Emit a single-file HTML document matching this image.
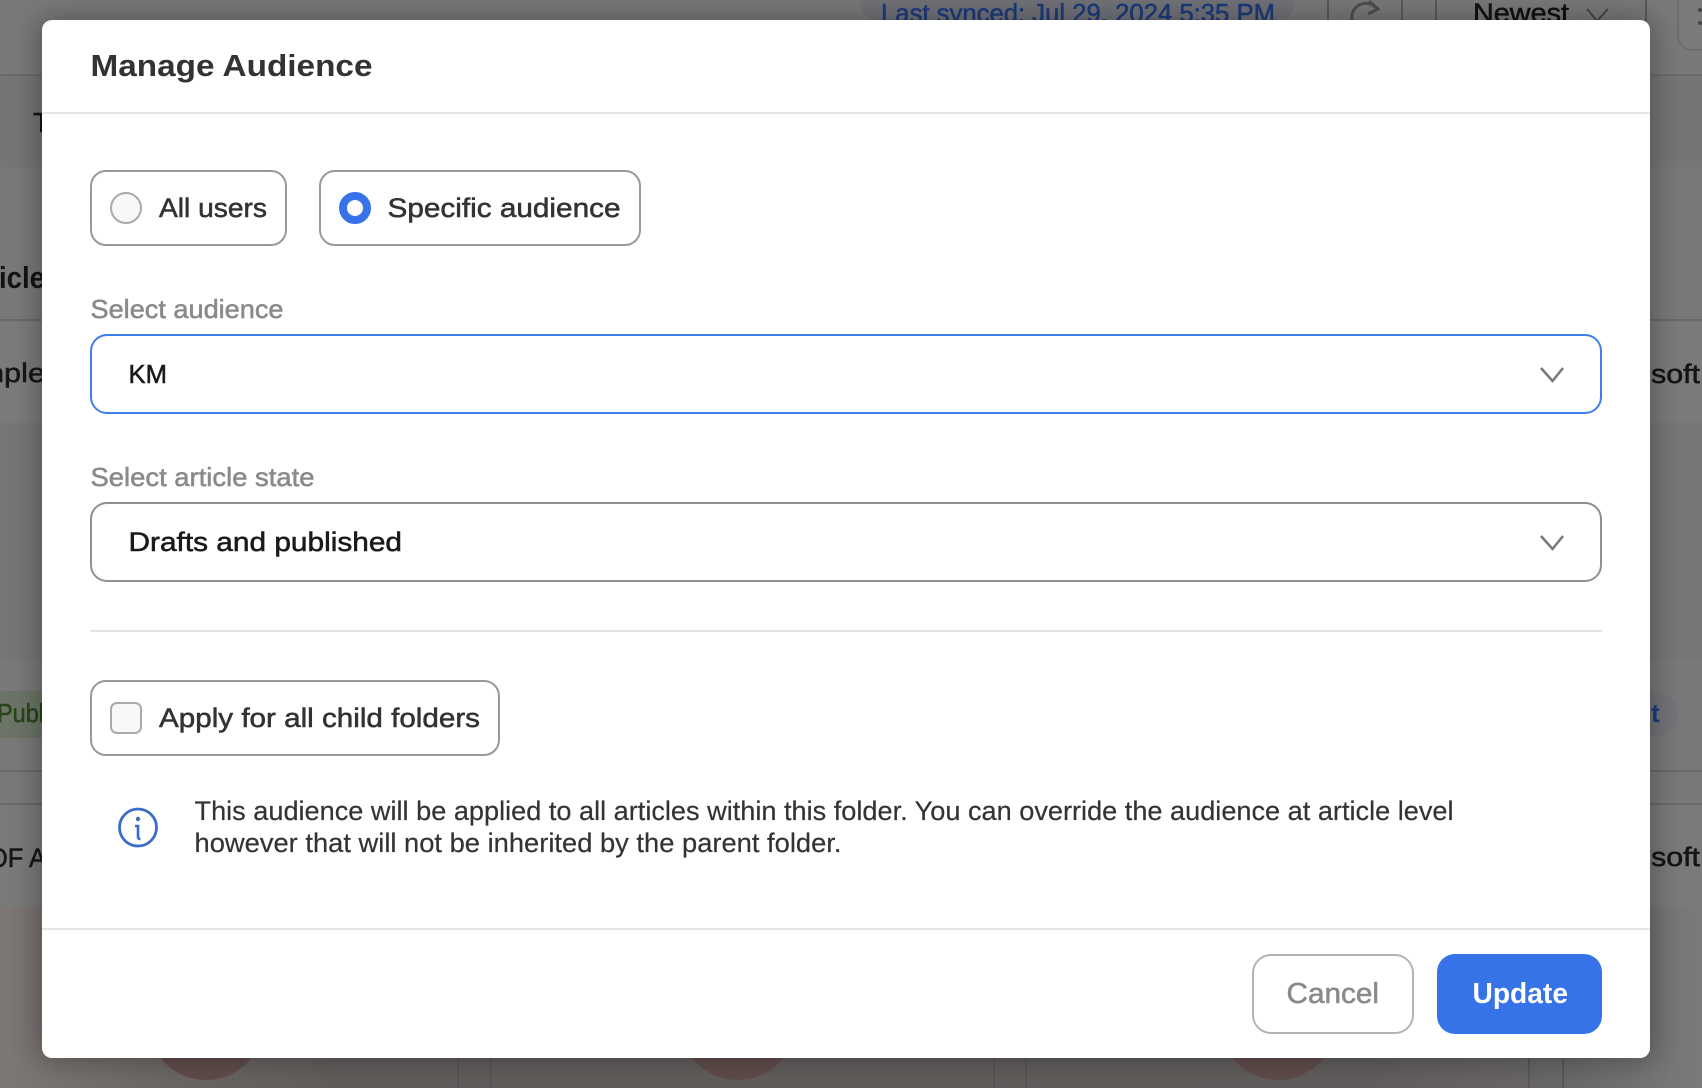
<!DOCTYPE html>
<html lang="en"><head><meta charset="utf-8"><title>Manage Audience</title>
<style>
html,body{margin:0;padding:0;width:1702px;height:1088px;overflow:hidden;background:#6a6766}
svg{display:block}
text{font-family:"Liberation Sans",sans-serif}
.m{stroke-width:.55px;paint-order:stroke}
.r{stroke-width:.2px;paint-order:stroke}
</style></head><body>
<svg width="1702" height="1088" viewBox="0 0 1702 1088" xmlns="http://www.w3.org/2000/svg">
<defs>
<linearGradient id="bt" x1="0" y1="0" x2="1" y2="0">
<stop offset="0" stop-color="#7d7775"/><stop offset=".1" stop-color="#6b6664"/><stop offset=".2" stop-color="#615d5c"/><stop offset=".8" stop-color="#605d5c"/><stop offset=".92" stop-color="#6a6867"/><stop offset="1" stop-color="#7a7a7a"/>
</linearGradient>
<filter id="sh" x="-5%" y="-5%" width="110%" height="110%"><feGaussianBlur stdDeviation="14"/></filter>
</defs>
<rect width="1702" height="1088" fill="#797979"/>
<rect y="76" width="1702" height="91" fill="#757575"/>
<rect y="167" width="1702" height="153" fill="#797979"/>
<rect y="322" width="1702" height="101" fill="#7b7b7b"/>
<rect y="423" width="1702" height="237" fill="#767676"/>
<rect y="660" width="1702" height="110" fill="#797979"/>
<rect y="805" width="1702" height="102" fill="#7a7a7a"/>
<rect y="907" width="1702" height="181" fill="url(#bt)"/>
<rect y="74" width="1702" height="2" fill="#6c6c6c"/>
<rect y="319" width="1702" height="2" fill="#696969"/>
<rect y="770" width="1702" height="2" fill="#696969"/>
<rect y="803" width="1702" height="2" fill="#696969"/>

<!-- background page content -->
<rect x="860" y="-20" width="435" height="42" rx="20" fill="#707278"/>
<text x="881" y="22" font-size="26" fill="#1d3a7c" textLength="394" lengthAdjust="spacingAndGlyphs" class="m" stroke="#1d3a7c">Last synced: Jul 29, 2024 5:35 PM</text>
<path d="M1328 0V22M1402 0V22M1436 0V22M1646 0V22" stroke="#4e4e4e" stroke-width="1.5"/>
<path d="M1377 9A14 14 0 1 0 1379 22M1369 1l9 8-10 5" fill="none" stroke="#4f4f4f" stroke-width="3"/>
<text x="1473" y="22" font-size="27" fill="#111" textLength="96" lengthAdjust="spacingAndGlyphs" class="m" stroke="#111">Newest</text>
<path d="M1587 9l10 12 11-12" fill="none" stroke="#444" stroke-width="2"/>
<rect x="1678" y="-20" width="60" height="70" rx="14" fill="#7a7a7a" stroke="#6a6a6a" stroke-width="1.5"/>
<circle cx="1700" cy="10" r="2" fill="#444"/><circle cx="1700" cy="23" r="2" fill="#444"/>
<text x="33" y="132" font-size="28" fill="#141414" class="m" stroke="#141414">T</text>
<text x="-1" y="288" font-size="31" font-weight="bold" fill="#141414" textLength="46" lengthAdjust="spacingAndGlyphs">icle</text>
<text x="-13" y="382" font-size="27" fill="#171717" textLength="58" lengthAdjust="spacingAndGlyphs" class="m" stroke="#171717">nple</text>
<text x="1651" y="383" font-size="27" fill="#141414" textLength="49" lengthAdjust="spacingAndGlyphs" class="m" stroke="#141414">soft</text>
<rect x="-20" y="691" width="90" height="47" rx="22" fill="#6c7467"/>
<text x="-3" y="722" font-size="26" fill="#28451a" textLength="47" lengthAdjust="spacingAndGlyphs" class="m" stroke="#28451a">Publ</text>
<rect x="1600" y="692" width="78" height="45" rx="22" fill="#727478"/>
<text x="1651" y="722" font-size="26" font-weight="bold" fill="#1d3a80">t</text>
<text x="-12" y="867" font-size="27" fill="#171717" textLength="58" lengthAdjust="spacingAndGlyphs" class="m" stroke="#171717">OF A</text>
<text x="1651" y="866" font-size="27" fill="#141414" textLength="49" lengthAdjust="spacingAndGlyphs" class="m" stroke="#141414">soft</text>
<circle cx="206" cy="1022" r="58" fill="#604c4a"/>
<circle cx="738" cy="1022" r="58" fill="#604c4a"/>
<circle cx="1278" cy="1022" r="58" fill="#604c4a"/>
<path d="M458 1057V1088M491 1057V1088M994 1057V1088M1026 1057V1088M1529 1057V1088M1563 1057V1088" stroke="#555353" stroke-width="1.5"/>

<!-- modal -->
<rect x="38" y="18" width="1616" height="1042" rx="12" fill="#000" opacity=".3" filter="url(#sh)"/>
<rect x="42" y="20" width="1608" height="1038" rx="10" fill="#fff"/>
<text x="90.500" y="76" font-size="31" font-weight="bold" fill="#333" textLength="282" lengthAdjust="spacingAndGlyphs">Manage Audience</text>
<rect x="42" y="112" width="1608" height="2" fill="#e5e5e5"/>

<rect x="91" y="171" width="195" height="74" rx="15" fill="#fff" stroke="#999" stroke-width="2"/>
<circle cx="126" cy="208" r="15" fill="#f8f8f8" stroke="#aaa" stroke-width="2"/>
<text x="159" y="217" font-size="27" fill="#333" textLength="108" lengthAdjust="spacingAndGlyphs" class="m" stroke="#333">All users</text>

<rect x="320" y="171" width="320" height="74" rx="15" fill="#fff" stroke="#999" stroke-width="2"/>
<circle cx="355" cy="208" r="12" fill="#fff" stroke="#3672e8" stroke-width="8"/>
<text x="387.500" y="217" font-size="27" fill="#333" textLength="233" lengthAdjust="spacingAndGlyphs" class="m" stroke="#333">Specific audience</text>

<text x="90.500" y="318" font-size="26" fill="#8a8a8a" textLength="193" lengthAdjust="spacingAndGlyphs" class="m" stroke="#8a8a8a">Select audience</text>
<rect x="91" y="335" width="1510" height="78" rx="16" fill="#fff" stroke="#3f7fec" stroke-width="2"/>
<text x="128.500" y="383" font-size="26" fill="#1a1a1a" textLength="38.500" lengthAdjust="spacingAndGlyphs" class="m" stroke="#1a1a1a">KM</text>
<path d="M1541 368l11.500 13L1563 368" fill="none" stroke="#777" stroke-width="2.500"/>

<text x="90.500" y="486" font-size="26" fill="#8a8a8a" textLength="224" lengthAdjust="spacingAndGlyphs" class="m" stroke="#8a8a8a">Select article state</text>
<rect x="91" y="503" width="1510" height="78" rx="16" fill="#fff" stroke="#8f8f8f" stroke-width="2"/>
<text x="128.500" y="551" font-size="27" fill="#1a1a1a" textLength="273.500" lengthAdjust="spacingAndGlyphs" class="m" stroke="#1a1a1a">Drafts and published</text>
<path d="M1541 536l11.500 13L1563 536" fill="none" stroke="#777" stroke-width="2.500"/>

<rect x="90" y="630" width="1512" height="2" fill="#e3e3e3"/>

<rect x="91" y="681" width="408" height="74" rx="15" fill="#fff" stroke="#999" stroke-width="2"/>
<rect x="111" y="703" width="30" height="30" rx="6" fill="#f8f8f8" stroke="#aaa" stroke-width="2"/>
<text x="159" y="727" font-size="27" fill="#333" textLength="321" lengthAdjust="spacingAndGlyphs" class="m" stroke="#333">Apply for all child folders</text>

<circle cx="138" cy="827.500" r="18.500" fill="none" stroke="#3b6cc8" stroke-width="2.800"/>
<circle cx="138" cy="819" r="2.200" fill="#3b6cc8"/>
<path d="M135 826h3v11q0 2 2.500 2" fill="none" stroke="#3b6cc8" stroke-width="2.600"/>
<text x="194.500" y="820" font-size="27" fill="#333" textLength="1259" lengthAdjust="spacingAndGlyphs" class="r" stroke="#333">This audience will be applied to all articles within this folder. You can override the audience at article level</text>
<text x="194.500" y="852" font-size="27" fill="#333" textLength="647" lengthAdjust="spacingAndGlyphs" class="r" stroke="#333">however that will not be inherited by the parent folder.</text>

<rect x="42" y="928" width="1608" height="2" fill="#e5e5e5"/>

<rect x="1253" y="955" width="160" height="78" rx="18" fill="#fff" stroke="#b3b3b3" stroke-width="2"/>
<text x="1286.500" y="1003" font-size="29" fill="#8a8a8a" textLength="92.500" lengthAdjust="spacingAndGlyphs" class="m" stroke="#8a8a8a">Cancel</text>
<rect x="1437" y="954" width="165" height="80" rx="18" fill="#3672e8"/>
<text x="1472.500" y="1003" font-size="29" font-weight="bold" fill="#fff" textLength="95.500" lengthAdjust="spacingAndGlyphs">Update</text>
</svg>
</body></html>
